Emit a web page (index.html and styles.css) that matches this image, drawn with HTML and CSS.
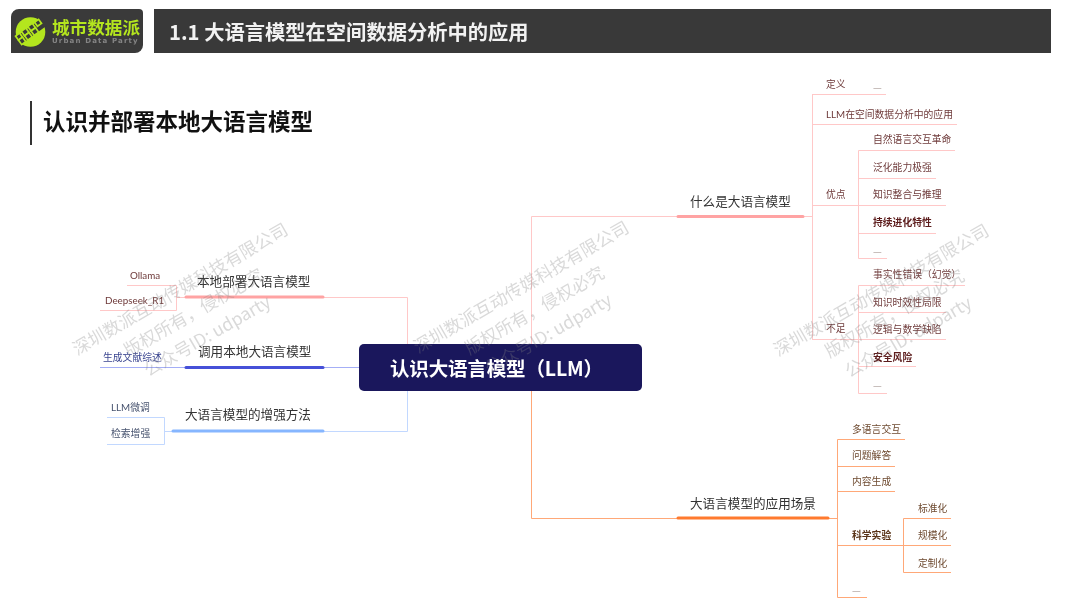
FILE: index.html
```html
<!DOCTYPE html>
<html lang="zh-CN">
<head>
<meta charset="utf-8">
<title>认识并部署本地大语言模型</title>
<link rel="stylesheet" href="styles.css">
</head>
<body>
<div class="slide">
  <header class="topbar">
    <div class="logo">
      <svg class="logo-mark" viewBox="0 0 33 30" aria-hidden="true">
        <circle cx="16.5" cy="15" r="14.8" fill="#b4e61e"/>
        <g transform="rotate(-36 16.5 15)">
          <path d="M-2 10.5h36v9H-2z" fill="#3a3a3a"/>
          <g fill="#3a3a3a" stroke="#b4e61e" stroke-width="1.7">
            <rect x="2" y="9.5" width="5" height="5"/>
            <rect x="2" y="14.5" width="5" height="5.5"/>
            <rect x="9.5" y="9" width="5.5" height="5.5"/>
            <rect x="9.5" y="14.5" width="5.5" height="5.5"/>
            <rect x="17.5" y="9" width="5.5" height="5.5"/>
            <rect x="17.5" y="14.5" width="5.5" height="5.5"/>
            <rect x="25.5" y="9.5" width="5" height="5"/>
          </g>
        </g>
      </svg>
      <div class="logo-text">
        <div class="logo-cn">城市数据派</div>
        <div class="logo-en">Urban Data Party</div>
      </div>
    </div>
    <div class="title-bar">1.1 大语言模型在空间数据分析中的应用</div>
  </header>

  <h1 class="heading">认识并部署本地大语言模型</h1>

  <div class="map">
    <svg class="wires" viewBox="0 0 1080 608" aria-hidden="true">
      <g class="thin pink">
        <path d="M324 297.5H407.5V345"/>
        <path d="M127 285.5H176.5V310.5H100M176.5 297.5H185"/>
        <path d="M531.5 345V216.5H677M804 216.5H812.5M812.5 94.5V339.5"/>
        <path d="M812 94.5H886M812 124.5H957M812 205.5H859M812 339.5H859"/>
        <path d="M887 258.5H858.5V150.5H955M858.5 178.5H936M858.5 205.5H946M858.5 233.5H936"/>
        <path d="M965 285.5H858.5V393.5H887M858.5 312.5H946M858.5 339.5H946M858.5 366.5H916"/>
      </g>
      <g class="thin blue">
        <path d="M100 367.5H185M324 367.5H360"/>
      </g>
      <g class="thin sky">
        <path d="M324 431.5H407.5V391"/>
        <path d="M107 417.5H164.5V444.5H107M164.5 431.5H172"/>
      </g>
      <g class="thin orange">
        <path d="M531.5 391V518.5H677M829 518.5H837.5"/>
        <path d="M905 439.5H837.5V597.5H867M837.5 466.5H895M837.5 491.5H895M837.5 545.5H951"/>
        <path d="M951 518.5H903.5V572.5H951"/>
      </g>
      <path class="thick c-pink" d="M186 297H323M678 216.5H803"/>
      <path class="thick c-blue" d="M186 367.5H323"/>
      <path class="thick c-sky" d="M173 431H323"/>
      <path class="thick c-orange" d="M678 518H828"/>
    </svg>

    <div class="root">认识大语言模型（LLM）</div>

    <span class="branch b1">本地部署大语言模型</span>
    <span class="branch b2">调用本地大语言模型</span>
    <span class="branch b3">大语言模型的增强方法</span>
    <span class="branch b4">什么是大语言模型</span>
    <span class="branch b5">大语言模型的应用场景</span>

    <span class="leaf red l-ollama">Ollama</span>
    <span class="leaf red l-deepseek">Deepseek_R1</span>
    <span class="leaf navy l-review">生成文献综述</span>
    <span class="leaf slate l-tune">LLM微调</span>
    <span class="leaf slate l-rag">检索增强</span>

    <span class="leaf red l-def">定义</span>
    <span class="leaf dash l-def-dash">—</span>
    <span class="leaf red l-use">LLM在空间数据分析中的应用</span>
    <span class="leaf red l-pro">优点</span>
    <span class="leaf red l-p1">自然语言交互革命</span>
    <span class="leaf red l-p2">泛化能力极强</span>
    <span class="leaf red l-p3">知识整合与推理</span>
    <span class="leaf red strong l-p4">持续进化特性</span>
    <span class="leaf dash l-p5">—</span>
    <span class="leaf red l-con">不足</span>
    <span class="leaf red l-c1">事实性错误（幻觉）</span>
    <span class="leaf red l-c2">知识时效性局限</span>
    <span class="leaf red l-c3">逻辑与数学缺陷</span>
    <span class="leaf red strong l-c4">安全风险</span>
    <span class="leaf dash l-c5">—</span>

    <span class="leaf brown l-a1">多语言交互</span>
    <span class="leaf brown l-a2">问题解答</span>
    <span class="leaf brown l-a3">内容生成</span>
    <span class="leaf brown strong l-a4">科学实验</span>
    <span class="leaf dash l-a5">—</span>
    <span class="leaf brown l-s1">标准化</span>
    <span class="leaf brown l-s2">规模化</span>
    <span class="leaf brown l-s3">定制化</span>
  </div>

  <div class="mark m1">深圳数派互动传媒科技有限公司<br>版权所有，侵权必究<br>公众号ID: udparty</div>
  <div class="mark m2">深圳数派互动传媒科技有限公司<br>版权所有，侵权必究<br>公众号ID: udparty</div>
  <div class="mark m3">深圳数派互动传媒科技有限公司<br>版权所有，侵权必究<br>公众号ID: udparty</div>
</div>
</body>
</html>
```

FILE: styles.css
```css
* { box-sizing: border-box; }

html, body {
  margin: 0;
  padding: 0;
  background: #fff;
}

.slide {
  position: relative;
  width: 1080px;
  height: 608px;
  overflow: hidden;
  background: #fff;
  font-family: "Noto Sans CJK SC", "Noto Sans", sans-serif;
  filter: blur(0.4px);
}

/* top bar */
.topbar {
  display: flex;
  gap: 11px;
  height: 44px;
  margin: 9px 29px 0 11px;
}

.logo {
  display: flex;
  align-items: center;
  width: 132px;
  padding-left: 3px;
  background: #3a3a3a;
  border-radius: 8px 4px 8px 0;
}

.logo-mark {
  flex: none;
  width: 33px;
  height: 30px;
  margin-top: 2px;
  overflow: visible;
}

.logo-text {
  display: flex;
  flex-direction: column;
  margin-left: 5px;
}

.logo-cn {
  color: #b4e61e;
  font-size: 17.6px;
  font-weight: 700;
  line-height: 21px;
  white-space: nowrap;
}

.logo-en {
  color: #858585;
  font-family: "DejaVu Sans", sans-serif;
  font-size: 7px;
  font-weight: 700;
  letter-spacing: 1.15px;
  line-height: 9px;
  white-space: nowrap;
}

.title-bar {
  flex: 1;
  padding-left: 15px;
  background: #393939;
  color: #f2f2f2;
  font-size: 20.3px;
  font-weight: 700;
  line-height: 44px;
  white-space: nowrap;
}

/* heading */
.heading {
  height: 44px;
  margin: 48px 0 0 30px;
  padding-left: 11px;
  border-left: 2px solid #333;
  color: #111;
  font-size: 22.5px;
  font-weight: 700;
  line-height: 38px;
  white-space: nowrap;
}

/* mind map: a free canvas, positions are the content */
.map {
  position: absolute;
  inset: 0;
}

.wires {
  position: absolute;
  inset: 0;
  width: 1080px;
  height: 608px;
  fill: none;
}

.thin { stroke-width: 1; fill: none; }
.pink { stroke: #ffc8c8; }
.blue { stroke: #a4aef6; }
.sky { stroke: #c2d8ff; }
.orange { stroke: #ffa878; }

.thick { stroke-width: 3; stroke-linecap: round; fill: none; }
.c-pink { stroke: #ffa3a3; }
.c-blue { stroke: #4650d8; }
.c-sky { stroke: #86b6ff; }
.c-orange { stroke: #ff7a2e; }

.root {
  position: absolute;
  left: 359px;
  top: 344px;
  width: 283px;
  height: 47px;
  padding-left: 31px;
  border-radius: 5px;
  background: #1a175c;
  color: #fff;
  font-size: 19.5px;
  font-weight: 700;
  letter-spacing: -0.15px;
  line-height: 47px;
  white-space: nowrap;
}

.branch,
.leaf {
  position: absolute;
  height: 20px;
  line-height: 20px;
  white-space: nowrap;
}

.branch {
  color: #333;
  font-size: 12.6px;
}

.leaf {
  font-family: "Lato", "Noto Sans CJK SC", sans-serif;
  font-size: 9.8px;
}

.leaf.dash {
  color: #a89a96;
  font-family: "Noto Sans CJK SC", sans-serif;
}

.red { color: #6e3a3a; }
.navy { color: #3a4590; }
.slate { color: #46526e; }
.brown { color: #6e4a30; }
.strong { font-weight: 700; color: #5c1c1c; }
.brown.strong { color: #5a3418; }

.b1 { left: 197px; top: 271px; }
.b2 { left: 198px; top: 341px; }
.b3 { left: 185px; top: 404px; }
.b4 { left: 690px; top: 191px; }
.b5 { left: 690px; top: 493px; }

.l-ollama { left: 130px; top: 265px; }
.l-deepseek { left: 105px; top: 290px; }
.l-review { left: 103px; top: 347px; }
.l-tune { left: 111px; top: 397px; }
.l-rag { left: 111px; top: 423px; }

.l-def { left: 826px; top: 74px; }
.l-def-dash { left: 873px; top: 77px; }
.l-use { left: 826px; top: 104px; }
.l-pro { left: 826px; top: 184px; }
.l-p1 { left: 873px; top: 129px; }
.l-p2 { left: 873px; top: 157px; }
.l-p3 { left: 873px; top: 184px; }
.l-p4 { left: 873px; top: 212px; }
.l-p5 { left: 873px; top: 241px; }
.l-con { left: 826px; top: 318px; }
.l-c1 { left: 873px; top: 264px; }
.l-c2 { left: 873px; top: 292px; }
.l-c3 { left: 873px; top: 319px; }
.l-c4 { left: 873px; top: 347px; }
.l-c5 { left: 873px; top: 375px; }

.l-a1 { left: 852px; top: 419px; }
.l-a2 { left: 852px; top: 445px; }
.l-a3 { left: 852px; top: 471px; }
.l-a4 { left: 852px; top: 525px; }
.l-a5 { left: 852px; top: 580px; }
.l-s1 { left: 918px; top: 498px; }
.l-s2 { left: 918px; top: 525px; }
.l-s3 { left: 918px; top: 553px; }

/* watermarks lie over the map */
.mark {
  position: absolute;
  width: 280px;
  margin: -40px 0 0 -140px;
  color: rgba(130, 130, 130, 0.3);
  font-size: 17.5px;
  line-height: 27px;
  text-align: center;
  white-space: nowrap;
  transform: rotate(-30deg);
}

.m1 { left: 193px; top: 311px; }
.m2 { left: 534px; top: 309px; }
.m3 { left: 894px; top: 312px; }
```
